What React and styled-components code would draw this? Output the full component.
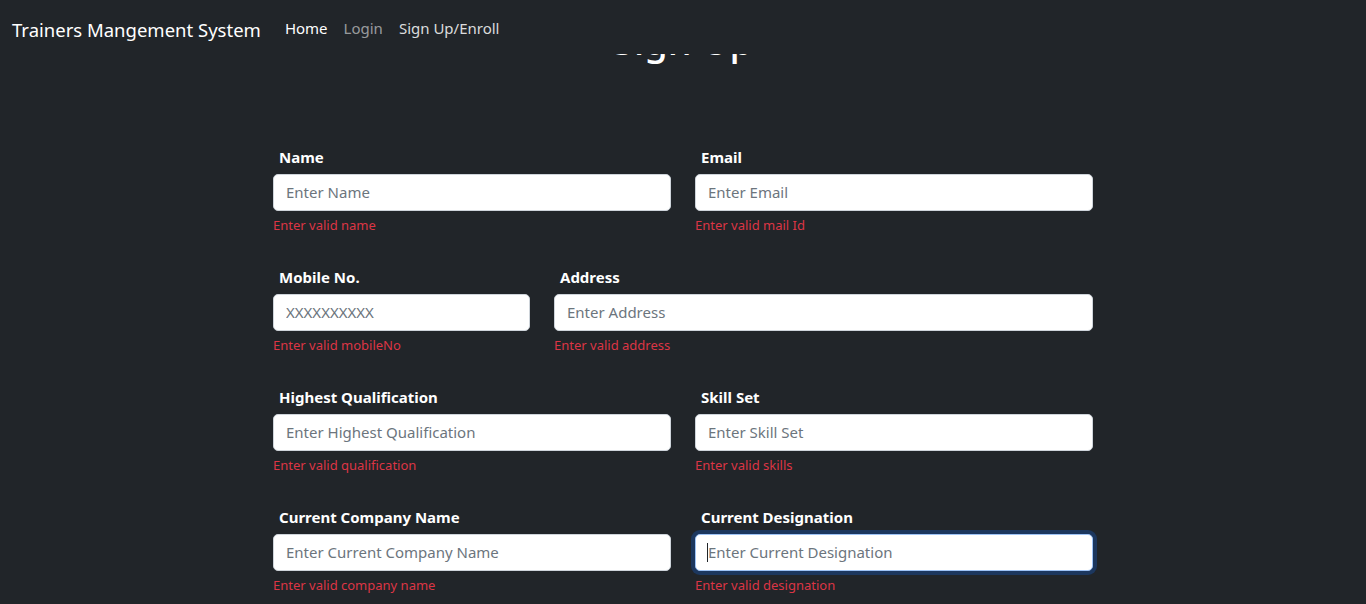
import styled, { createGlobalStyle } from 'styled-components'

const GlobalStyle = createGlobalStyle`
  html, body {
    margin: 0;
    padding: 0;
    background: #212529;
    color: #fff;
    font-family: "Noto Sans", "Open Sans", sans-serif;
  }
  * { box-sizing: border-box; }
`

const Nav = styled.nav`
  position: fixed;
  top: 0;
  left: 0;
  right: 0;
  height: 54px;
  display: flex;
  align-items: center;
  padding: 0 12px;
  background: #212529;
  z-index: 10;
`
const Brand = styled.a`
  font-size: 18.5px;
  color: #fff;
  margin-right: 24px;
  margin-top: 4px;
`
const NavLinks = styled.div`
  display: flex;
  gap: 16px;
  margin-top: 2px;
`
const NavLink = styled.a`
  font-size: 15px;
  color: ${p => p.tone || 'rgba(255,255,255,0.55)'};
`

const Main = styled.main`
  padding-top: 18px;
  display: flex;
  flex-direction: column;
  align-items: center;
`
const Heading = styled.h1`
  margin: 0;
  font-size: 38px;
  font-weight: 500;
  line-height: 1.2;
`
const Form = styled.form`
  width: 820px;
  margin-top: 82px;
  display: flex;
  flex-direction: column;
  gap: 31px;
`
const Row = styled.div`
  display: grid;
  grid-template-columns: ${p => p.cols || '1fr 1fr'};
  column-gap: 24px;
`
const Field = styled.div`
  display: flex;
  flex-direction: column;
`
const Label = styled.label`
  font-size: 15px;
  font-weight: 700;
  padding-left: 6px;
  line-height: 22px;
  margin-bottom: 6px;
`
const InputWrap = styled.div`
  position: relative;
  display: flex;
`
const Input = styled.input`
  flex: 1;
  width: 100%;
  height: 37px;
  border: 1px solid ${p => (p.focused ? '#9ec3f5' : '#ced4da')};
  border-radius: 5px;
  background: #fff;
  padding: 0 12px;
  font-family: inherit;
  font-size: 15px;
  color: #212529;
  outline: none;
  box-shadow: ${p => (p.focused ? '0 0 0 4px #1c375e' : 'none')};
  &::placeholder { color: #6c757d; }
`
const Caret = styled.span`
  position: absolute;
  left: 12px;
  top: 9px;
  width: 1px;
  height: 19px;
  background: #212529;
`
const Error = styled.div`
  color: #dc3545;
  font-size: 13px;
  line-height: 20px;
  margin-top: 4px;
`

const rows = [
  { cols: '1fr 1fr', fields: [
    { label: 'Name', ph: 'Enter Name', err: 'Enter valid name' },
    { label: 'Email', ph: 'Enter Email', err: 'Enter valid mail Id' },
  ] },
  { cols: '257px 1fr', fields: [
    { label: 'Mobile No.', ph: 'XXXXXXXXXX', err: 'Enter valid mobileNo' },
    { label: 'Address', ph: 'Enter Address', err: 'Enter valid address' },
  ] },
  { cols: '1fr 1fr', fields: [
    { label: 'Highest Qualification', ph: 'Enter Highest Qualification', err: 'Enter valid qualification' },
    { label: 'Skill Set', ph: 'Enter Skill Set', err: 'Enter valid skills' },
  ] },
  { cols: '1fr 1fr', fields: [
    { label: 'Current Company Name', ph: 'Enter Current Company Name', err: 'Enter valid company name' },
    { label: 'Current Designation', ph: 'Enter Current Designation', err: 'Enter valid designation', focused: true },
  ] },
]

const App = () => {
  return (
    <>
      <GlobalStyle />
      <Nav>
        <Brand>Trainers Mangement System</Brand>
        <NavLinks>
          <NavLink tone="#fff">Home</NavLink>
          <NavLink>Login</NavLink>
          <NavLink tone="rgba(255,255,255,0.85)">Sign Up/Enroll</NavLink>
        </NavLinks>
      </Nav>
      <Main>
        <Heading>Sign Up</Heading>
        <Form>
          {rows.map((r, i) => (
            <Row key={i} cols={r.cols}>
              {r.fields.map(f => (
                <Field key={f.label}>
                  <Label>{f.label}</Label>
                  <InputWrap>
                    <Input placeholder={f.ph} focused={f.focused} readOnly />
                    {f.focused && <Caret />}
                  </InputWrap>
                  <Error>{f.err}</Error>
                </Field>
              ))}
            </Row>
          ))}
        </Form>
      </Main>
    </>
  )
}

export default App
